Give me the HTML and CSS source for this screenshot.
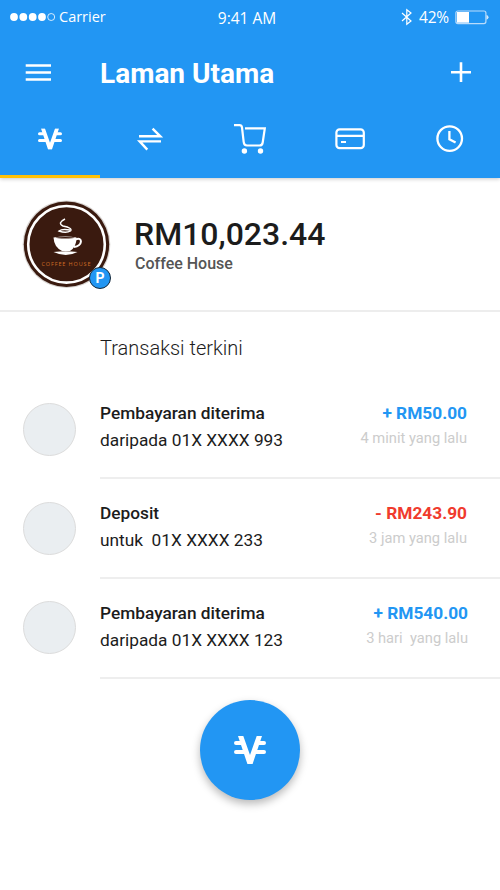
FILE: index.html
```html
<!DOCTYPE html>
<html lang="ms">
<head>
<meta charset="utf-8">
<title>Laman Utama</title>
<link rel="stylesheet" href="styles.css">
</head>
<body>
<svg class="symbols" aria-hidden="true">
  <symbol id="vcash" viewBox="0 0 32 28">
    <path d="M4 0H9.3L16 19L22.7 0H28L18.6 28H13.4Z" fill="#fff"/>
    <path d="M2 7H7M2 16H10M30 7H25M30 16H22" stroke="#fff" stroke-width="4" stroke-linecap="round"/>
  </symbol>
</svg>
<header class="header">
  <div class="status">
    <div class="status-left">
      <svg width="46" height="10" viewBox="0 0 46 10" fill="#fff"><circle cx="4" cy="5" r="3.9"/><circle cx="13.3" cy="5" r="3.9"/><circle cx="22.7" cy="5" r="3.9"/><circle cx="32" cy="5" r="3.9"/><circle cx="41.2" cy="5" r="3.5" fill="none" stroke="#fff" stroke-width=".8"/></svg>
      <span class="carrier">Carrier</span>
    </div>
    <span class="time">9:41 AM</span>
    <div class="status-right">
      <svg width="12" height="18" viewBox="0 0 12 18" fill="none" stroke="#fff" stroke-width="1.2"><path d="M1 5L10 13L5.800 16.300V1.700L10 5L1 13"/></svg>
      <span class="percent">42%</span>
      <svg class="battery" width="34" height="15" viewBox="0 0 34 15"><rect x=".9" y="1" width="30" height="12.600" rx="2" fill="none" stroke="#b9dcfb" stroke-width="1.200"/><path d="M2 2H14V12.700H2Z" fill="#fff"/><path d="M31.500 5Q33.500 5.500 33.500 7.300T31.500 9.800Z" fill="#d3e9fc"/></svg>
    </div>
  </div>
  <div class="toolbar">
    <svg class="menu" width="26" height="18" viewBox="0 0 26 18"><path d="M-.3 1.500H25M-.3 8.500H25M-.3 15.500H25" stroke="#fff" stroke-width="2.500"/></svg>
    <h1 class="title">Laman Utama</h1>
    <svg class="add" width="20" height="20" viewBox="0 0 20 20"><path d="M0 10.300H20M10 .3V20" stroke="#fff" stroke-width="2.600"/></svg>
  </div>
  <nav class="tabs">
    <a class="tab active"><svg width="100" height="60" viewBox="0 110 100 60"><use href="#vcash" x="38" y="128.200" width="24" height="21.500"/></svg></a>
    <a class="tab"><svg width="100" height="60" viewBox="100 110 100 60" fill="none" stroke="#fff" stroke-width="2.400"><path d="M139 136.300H160.300L152.600 128.600M161 141.400H139.700L147.300 149.600"/></svg></a>
    <a class="tab"><svg width="100" height="60" viewBox="200 110 100 60" fill="none" stroke="#fff" stroke-width="2.200"><path d="M234 125.200H239.500Q241.600 125.200 242 127.500L243.700 142Q244 145.500 247 145.500H259.500Q262.300 145.500 262.700 142.500L264.800 128.300H245"/><g fill="#fff" stroke="none"><circle cx="244.400" cy="151" r="2.700"/><circle cx="260.500" cy="151" r="2.700"/></g></svg></a>
    <a class="tab"><svg width="100" height="60" viewBox="300 110 100 60" fill="none" stroke="#fff" stroke-width="2.200"><rect x="336.400" y="129.400" width="27.400" height="18.800" rx="3.200"/><path d="M336.400 135.800H363.800M341 142H346"/></svg></a>
    <a class="tab"><svg width="100" height="60" viewBox="400 110 100 60" fill="none" stroke="#fff" stroke-width="2.300"><circle cx="449.700" cy="138.600" r="12.300"/><path d="M449.400 131V139.300L455.600 142.500"/></svg></a>
  </nav>
</header>
<main>
  <section class="account">
    <div class="shop">
      <svg width="90" height="90" viewBox="0 0 90 90">
        <circle cx="45.500" cy="45.300" r="43.800" fill="#d8d4d1"/>
        <circle cx="45.500" cy="45.300" r="42.700" fill="#3a1a0f"/>
        <circle cx="45.500" cy="45.300" r="38.300" fill="none" stroke="#fff" stroke-width="2.600"/>
        <path d="M32.500 38.500Q45 36.500 55.500 38.500Q55.500 48 49 52H41Q33 48 32.500 38.500Z" fill="#fff"/>
        <path d="M54.500 40.500C62 37 62 47 53 48" fill="none" stroke="#fff" stroke-width="2"/>
        <ellipse cx="44.200" cy="38.700" rx="9.500" ry=".8" fill="#3a1a0f"/>
        <path d="M32.500 53Q45 51.500 56.500 53Q45 59 32.500 53Z" fill="#fff"/>
        <path d="M44 20Q36 24 42 27Q52 29 49.500 32Q45 34.500 38 32Q41 29.500 49 31" fill="none" stroke="#fff" stroke-width="1.400"/>
        <text x="20.500" y="66.500" class="shop-text" textLength="49">COFFEE HOUSE</text>
      </svg>
      <span class="badge">P</span>
    </div>
    <div>
      <div class="balance">RM10,023.44</div>
      <div class="name">Coffee House</div>
    </div>
  </section>
  <h2 class="heading">Transaksi terkini</h2>
  <ul class="list">
    <li class="row"><span class="avatar"></span><div class="entry"><div><div class="kind">Pembayaran diterima</div><div class="party">daripada 01X XXXX 993</div></div><div class="figures"><div class="amount">+ RM50.00</div><div class="ago">4 minit yang lalu</div></div></div></li>
    <li class="row"><span class="avatar"></span><div class="entry"><div><div class="kind">Deposit</div><div class="party">untuk&nbsp; 01X XXXX 233</div></div><div class="figures"><div class="amount out">- RM243.90</div><div class="ago">3 jam yang lalu</div></div></div></li>
    <li class="row"><span class="avatar"></span><div class="entry"><div><div class="kind">Pembayaran diterima</div><div class="party">daripada 01X XXXX 123</div></div><div class="figures"><div class="amount">+ RM540.00</div><div class="ago">3 hari&nbsp; yang lalu</div></div></div></li>
  </ul>
  <button class="pay" aria-label="Bayar"><svg width="32" height="28"><use href="#vcash" width="32" height="28"/></svg></button>
</main>
</body>
</html>
```
FILE: styles.css
```css
* { box-sizing: border-box; }
body { margin: 0; height: 890px; overflow: hidden; background: #fff; color: #1c1c1c; font-family: Roboto, "Liberation Sans", sans-serif; }
svg { display: block; flex: none; }
.symbols { position: absolute; width: 0; height: 0; }
.header { height: 178px; background: #2296f3; color: #fff; box-shadow: 0 1px 4px rgba(0, 0, 0, .22); }
.status { height: 34px; display: grid; grid-template-columns: 1fr auto 1fr; align-items: center; padding: 0 10px; font: 15px/20px "Open Sans", sans-serif; }
.status-left, .status-right { display: flex; align-items: center; }
.status-left { gap: 3px; }
.carrier { font-size: 14.5px; }
.time { margin: 2px 6px 0 0; font-size: 15.5px; letter-spacing: 0; }
.status-right { justify-content: flex-end; }
.percent { margin: 0 6px 0 6px; font-size: 15.5px; letter-spacing: -.2px; }
.battery { margin-right: 1px; }
.toolbar { height: 76px; display: flex; align-items: center; padding: 0 29px 0 26px; }
.menu { margin-top: 2px; overflow: visible; }
.title { margin: 4px 0 0 48px; font-size: 28px; line-height: 36px; font-weight: 700; white-space: nowrap; }
.add { margin-left: auto; }
.tabs { height: 68px; display: grid; grid-template-columns: repeat(5, 1fr); }
.tab { height: 68px; }
.active { border-bottom: 3px solid #ffc107; }
.account { height: 134px; display: flex; gap: 23px; padding: 21px 0 0 21px; border-bottom: 2px solid #ededed; }
.shop { position: relative; width: 90px; height: 90px; }
.shop-text { font: 5.500px "Open Sans", sans-serif; fill: #d06d26; }
.badge { position: absolute; left: 68px; top: 68px; width: 22px; height: 22px; border: 1px solid #142738; border-radius: 50%; background: #2296f3; color: #fff; font-size: 14px; line-height: 20px; font-weight: 700; text-align: center; }
.balance { margin-top: 14px; font-size: 32px; line-height: 42px; font-weight: 500; }
.name { padding-left: 1px; font-size: 16px; line-height: 18px; font-weight: 500; color: #555; }
.heading { margin: 0; padding: 23px 0 0 100px; height: 67px; font-size: 20px; line-height: 26px; font-weight: 300; }
.list { margin: 0; padding: 0; list-style: none; }
.row { height: 100px; display: flex; padding-left: 23px; }
.avatar { flex: none; width: 53px; height: 53px; margin: 24px 24px 0 0; border: 1px solid #dcdcdc; border-radius: 50%; background: #eaeef1; }
.row:nth-child(2) .avatar { margin-top: 23px; }
.row:nth-child(3) .avatar { margin-top: 22px; }
.entry { flex: 1; display: flex; justify-content: space-between; padding: 22px 33px 0 0; border-bottom: 2px solid #eee; white-space: nowrap; }
.kind { font-size: 17.3px; line-height: 24px; font-weight: 500; }
.party { margin-top: 2px; font-size: 17.3px; line-height: 26px; }
.figures { text-align: right; }
.amount { color: #2296f3; font-size: 17.3px; line-height: 24px; font-weight: 700; }
.out { color: #f03b2d; }
.ago { color: #ccc; font-size: 14.7px; line-height: 26px; }
.row:nth-child(3) .entry { padding-right: 32px; }
.pay { display: flex; align-items: center; justify-content: center; width: 100px; height: 100px; margin: 21px auto 0; padding: 0; border: 0; border-radius: 50%; background: #2296f3; box-shadow: 0 4px 9px rgba(0, 0, 0, .28); }
```
